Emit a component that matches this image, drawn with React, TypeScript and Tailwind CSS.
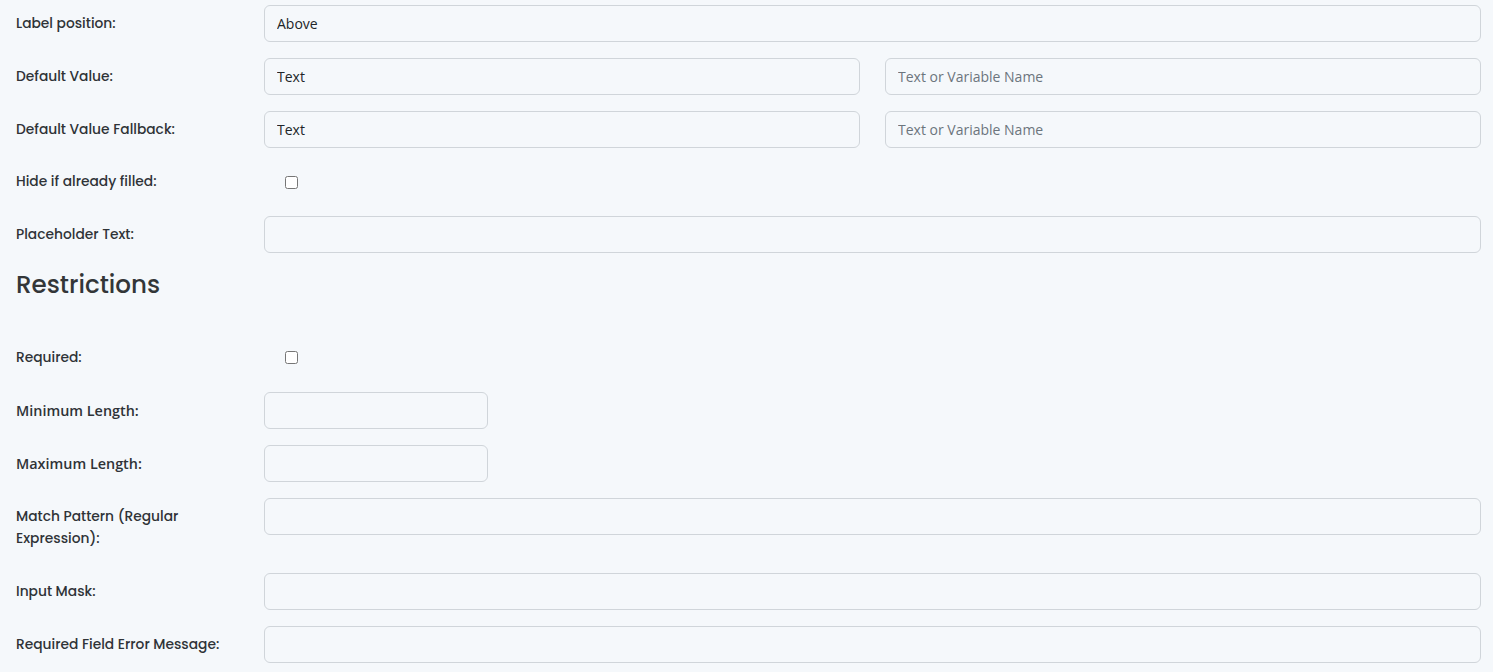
import React from "react";

// form rows for the text field settings panel
const labelFont = "font-['Poppins','Inter','Noto_Sans',sans-serif]";
const inputFont = "font-['Open_Sans','Noto_Sans',sans-serif]";

function Row({
  label,
  children,
  bold,
  compact,
}: {
  label: string;
  children: React.ReactNode;
  bold?: boolean;
  compact?: boolean;
}) {
  return (
    <div className="mb-4 flex">
      <label
        className={`mr-4 w-[232px] shrink-0 leading-[22px] text-[#2f3337] ${
          compact ? "py-[7px]" : "py-[7.5px]"
        } ${
          bold
            ? `${inputFont} text-[14.4px] font-semibold`
            : `${labelFont} text-[13.8px] font-medium`
        }`}
      >
        {label}
      </label>
      <div className="min-w-0 flex-1">{children}</div>
    </div>
  );
}

function TextInput({
  value,
  placeholder,
  className = "",
}: {
  value?: string;
  placeholder?: string;
  className?: string;
}) {
  return (
    <input
      type="text"
      defaultValue={value}
      placeholder={placeholder}
      className={`h-[37px] rounded-[6px] border border-[#d0d5da] bg-[#f5f8fb] px-3 text-[14px] text-[#212529] outline-none placeholder:text-[#6c757d] ${inputFont} ${className}`}
    />
  );
}

function Check() {
  return (
    <div className="flex h-[36px] items-center">
      <input type="checkbox" className="m-0 ml-[21px] h-[13px] w-[13px]" />
    </div>
  );
}

export default function App() {
  return (
    <div className="min-h-screen bg-[#f5f8fb] pl-4 pr-[12px] pt-[5px]">
      <Row label="Label position:">
        <TextInput value="Above" className="w-full" />
      </Row>
      <Row label="Default Value:">
        <div className="grid grid-cols-2 gap-[25px]">
          <TextInput value="Text" className="w-full" />
          <TextInput placeholder="Text or Variable Name" className="w-full" />
        </div>
      </Row>
      <Row label="Default Value Fallback:">
        <div className="grid grid-cols-2 gap-[25px]">
          <TextInput value="Text" className="w-full" />
          <TextInput placeholder="Text or Variable Name" className="w-full" />
        </div>
      </Row>
      <Row label="Hide if already filled:" compact>
        <Check />
      </Row>
      <Row label="Placeholder Text:">
        <TextInput className="w-full" />
      </Row>

      <h2 className={`mb-[39px] text-[24.6px] font-medium leading-[31px] text-[#333638] ${labelFont}`}>
        Restrictions
      </h2>

      <Row label="Required:">
        <Check />
      </Row>
      <Row label="Minimum Length:" bold>
        <TextInput className="w-[224px]" />
      </Row>
      <Row label="Maximum Length:" bold>
        <TextInput className="w-[224px]" />
      </Row>
      <Row label="Match Pattern (Regular Expression):">
        <TextInput className="w-full" />
      </Row>
      <Row label="Input Mask:">
        <TextInput className="w-full" />
      </Row>
      <Row label="Required Field Error Message:">
        <TextInput className="w-full" />
      </Row>
    </div>
  );
}
